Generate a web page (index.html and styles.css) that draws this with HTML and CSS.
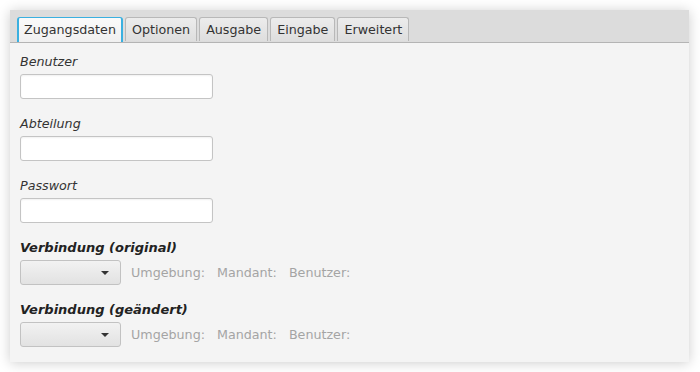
FILE: index.html
```html
<!DOCTYPE html>
<html lang="de">
<head>
    <meta charset="UTF-8">
    <title>Zugangsdaten</title>
    <link rel="stylesheet" href="styles.css">
</head>
<body>
    <div class="panel">
        <div class="tab-header">
            <div class="tab active">Zugangsdaten</div>
            <div class="tab">Optionen</div>
            <div class="tab">Ausgabe</div>
            <div class="tab">Eingabe</div>
            <div class="tab">Erweitert</div>
        </div>

        <div class="content">
            <div class="field">
                <label class="label">Benutzer</label>
                <div class="input"></div>
            </div>
            <div class="field">
                <label class="label">Abteilung</label>
                <div class="input"></div>
            </div>
            <div class="field">
                <label class="label">Passwort</label>
                <div class="input"></div>
            </div>
            <div class="field">
                <label class="label bold">Verbindung (original)</label>
                <div class="row">
                    <div class="combo"><span class="arrow"></span></div>
                    <span class="info">Umgebung:</span>
                    <span class="info">Mandant:</span>
                    <span class="info">Benutzer:</span>
                </div>
            </div>
            <div class="field">
                <label class="label bold">Verbindung (geändert)</label>
                <div class="row">
                    <div class="combo"><span class="arrow"></span></div>
                    <span class="info">Umgebung:</span>
                    <span class="info">Mandant:</span>
                    <span class="info">Benutzer:</span>
                </div>
            </div>
        </div>
    </div>
</body>
</html>
```

FILE: styles.css
```css
body {
    margin: 0;
    background-color: #fff;
    font-family: "DejaVu Sans", sans-serif;
    font-size: 12.7px;
    color: #333;
}

.panel {
    margin: 10px;
    width: 679px;
    height: 352px;
    background-color: #f4f4f4;
    box-shadow: 0 1px 12px rgba(0, 0, 0, 0.2);
}

.tab-header {
    display: flex;
    gap: 2px;
    height: 25px;
    padding: 7px 0 0 7px;
    background-color: #dcdcdc;
    border-bottom: 1px solid #b4b4b4;
}

.tab {
    height: 23px;
    line-height: 23px;
    padding: 0 6px;
    border: 1px solid #b8b8b8;
    border-bottom: none;
    border-radius: 3px 3px 0 0;
    background: linear-gradient(#ececec, #dedede);
    color: #333;
}

.tab.active {
    height: 24px;
    border-color: #3ab0e0;
    border-width: 1px 2px 0 2px;
    padding: 0 5px;
    background: linear-gradient(#fafafa, #f0f0f0);
}

.content {
    padding: 11px 0 0 10px;
}

.field {
    margin-bottom: 17px;
}

.label {
    display: block;
    height: 15px;
    line-height: 15px;
    margin-bottom: 5px;
    font-style: italic;
    color: #333;
}

.label.bold {
    font-size: 13px;
    font-weight: bold;
    color: #222;
}

.input {
    width: 191px;
    height: 23px;
    border: 1px solid #c4c4c4;
    border-radius: 3px;
    background-color: #fff;
    box-shadow: inset 0 1px 2px rgba(0, 0, 0, 0.06);
}

.row {
    display: flex;
    align-items: center;
    height: 25px;
}

.combo {
    position: relative;
    width: 99px;
    height: 23px;
    border: 1px solid #c2c2c2;
    border-radius: 3px;
    background: linear-gradient(#f2f2f2, #e2e2e2);
    margin-right: 10px;
}

.arrow {
    position: absolute;
    right: 11px;
    top: 10px;
    width: 0;
    height: 0;
    border-left: 4px solid transparent;
    border-right: 4px solid transparent;
    border-top: 4px solid #333;
}

.info {
    color: #a4a4a4;
    margin-right: 12px;
}
```
